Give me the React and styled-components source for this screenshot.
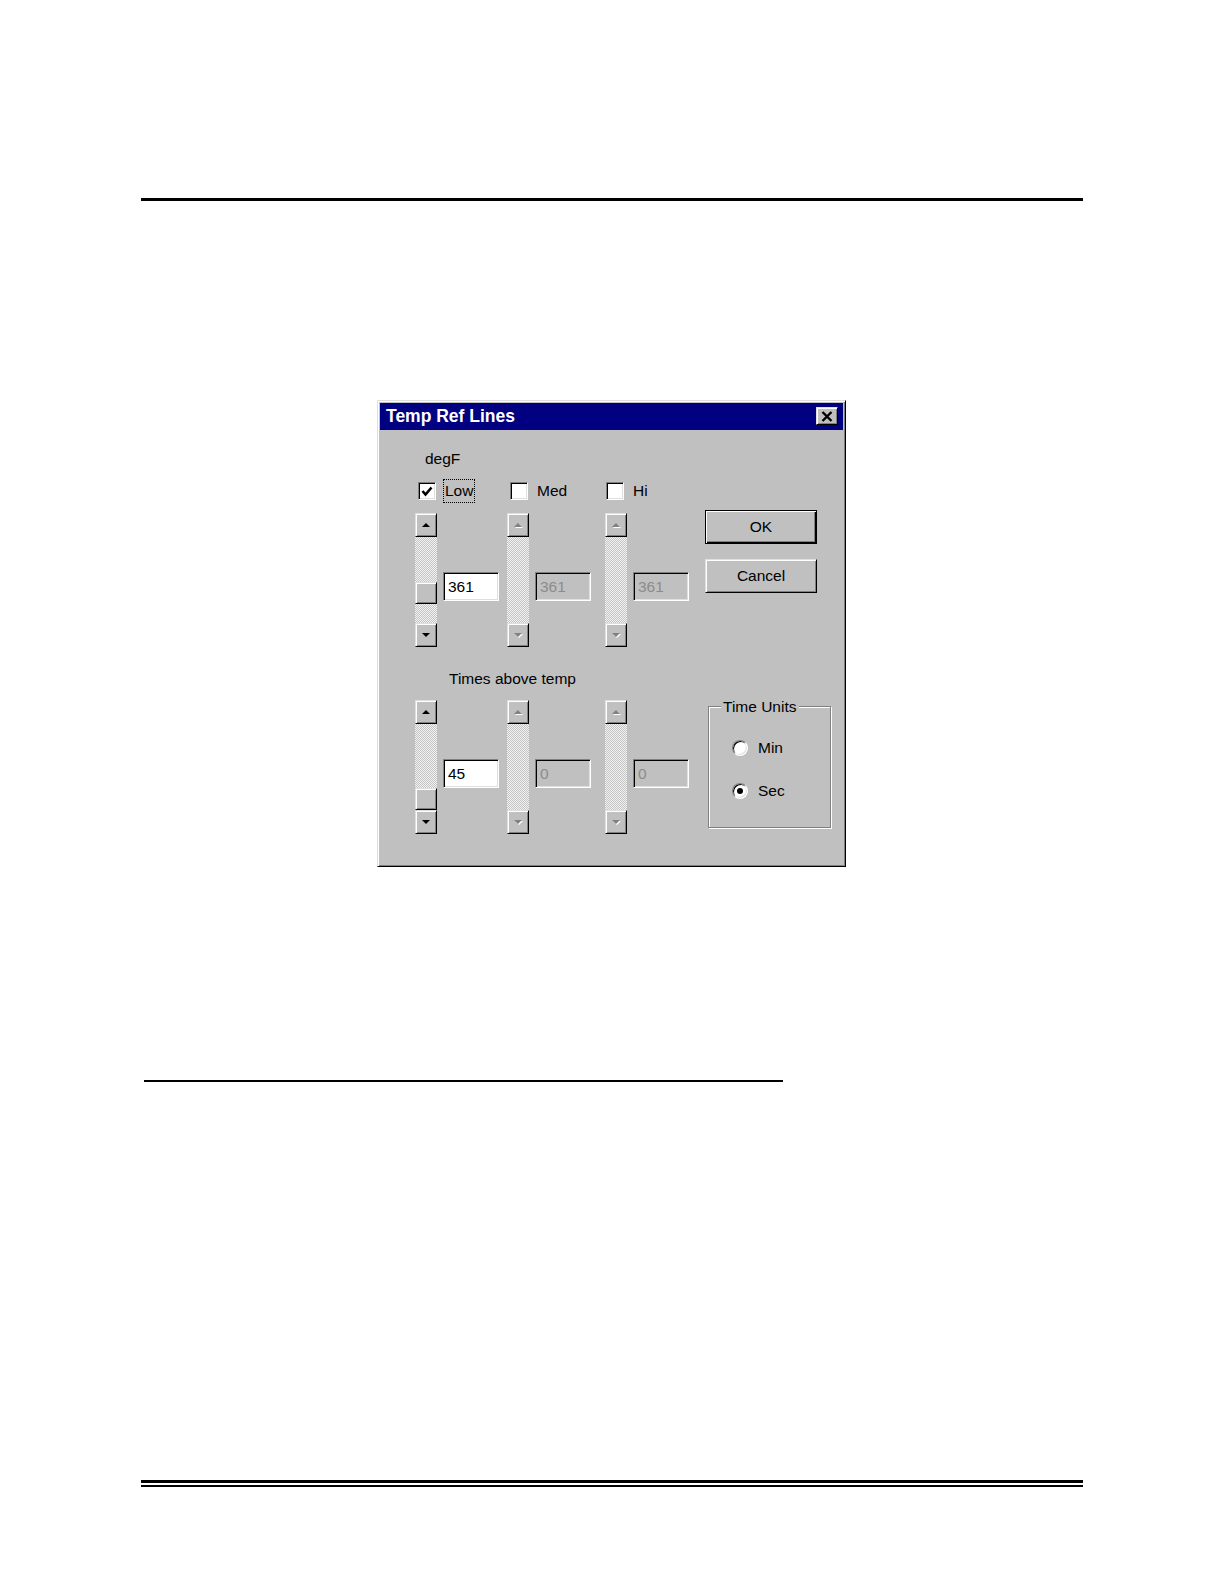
import styled, { createGlobalStyle, css } from "styled-components";

const GlobalStyle = createGlobalStyle`
  html, body {
    margin: 0;
    padding: 0;
    background: #fff;
  }
  body {
    font-family: "Liberation Sans", Arial, sans-serif;
  }
  * {
    box-sizing: border-box;
  }
`;

const raised = css`
  border: 1px solid;
  border-color: #dfdfdf #000 #000 #dfdfdf;
  box-shadow: inset 1px 1px #fff, inset -1px -1px #808080;
  background: #c0c0c0;
`;

const sunken = css`
  border: 1px solid;
  border-color: #808080 #fff #fff #808080;
  box-shadow: inset 1px 1px #000, inset -1px -1px #dfdfdf;
`;

const Page = styled.div`
  width: 1224px;
  min-height: 1584px;
  padding-top: 198px;
  display: flex;
  flex-direction: column;
`;

const Rule = styled.div`
  margin-left: ${(p) => p.left}px;
  margin-top: ${(p) => p.top || 0}px;
  width: ${(p) => p.width}px;
  height: ${(p) => p.thick}px;
  background: #000;
`;

const DoubleRule = styled.div`
  margin-left: 141px;
  margin-top: 398px;
  width: 942px;
  display: flex;
  flex-direction: column;
  gap: 1.5px;
`;

const Window = styled.div`
  ${raised};
  margin-left: 377px;
  margin-top: 199px;
  width: 469px;
  height: 467px;
  padding: 2px;
  display: flex;
  flex-direction: column;
`;

const TitleBar = styled.div`
  height: 27px;
  background: #000080;
  display: flex;
  align-items: center;
  justify-content: space-between;
  padding: 0 5px 1px 6px;
`;

const Title = styled.span`
  color: #fff;
  font-weight: bold;
  font-size: 17.5px;
  line-height: 20px;
`;

const CloseButton = styled.div`
  ${raised};
  width: 22px;
  height: 18px;
  display: flex;
  align-items: center;
  justify-content: center;
`;

const Body = styled.div`
  padding: 20px 0 0 35px;
  display: flex;
  flex-direction: column;
  font-size: 15.5px;
  color: #000;
`;

const Caption = styled.div`
  margin-left: ${(p) => p.indent}px;
  margin-top: ${(p) => p.top || 0}px;
  line-height: 18px;
  height: 18px;
`;

const Section = styled.div`
  display: flex;
  align-items: flex-start;
  margin-top: ${(p) => p.top}px;
`;

const Columns = styled.div`
  display: grid;
  grid-template-columns: 92px 98px 84px;
`;

const Column = styled.div`
  display: flex;
  flex-direction: column;
  gap: 13px;
`;

const CheckRow = styled.div`
  height: 18px;
  display: flex;
  align-items: center;
  padding-left: ${(p) => p.inset}px;
`;

const CheckBox = styled.div`
  ${sunken};
  width: 18px;
  height: 18px;
  background: #fff;
  display: flex;
  align-items: center;
  justify-content: center;
`;

const CheckLabel = styled.span`
  margin-left: 7px;
  padding: 0 1px;
  line-height: 22px;
  border: 1px ${(p) => (p.focused ? "dotted #000" : "solid transparent")};
`;

const ScrollGroup = styled.div`
  display: flex;
  align-items: flex-start;
`;

const ScrollBar = styled.div`
  width: 22px;
  height: 134px;
  display: flex;
  flex-direction: column;
`;

const ArrowButton = styled.div`
  ${raised};
  height: 24px;
  flex: none;
  display: flex;
  align-items: center;
  justify-content: center;
`;

const Arrow = styled.span`
  width: 0;
  height: 0;
  border-left: 4px solid transparent;
  border-right: 4px solid transparent;
  ${(p) => (p.down ? "border-top" : "border-bottom")}: 4px solid
    ${(p) => (p.disabled ? "#808080" : "#000")};
  ${(p) => p.disabled && "filter: drop-shadow(1px 1px 0 #fff);"}
`;

const Track = styled.div`
  flex: 1;
  background: repeating-conic-gradient(#c4c4c4 0 25%, #f2f2f2 0 50%) 0 0 / 2px 2px;
  display: flex;
  flex-direction: column;
`;

const Thumb = styled.div`
  ${raised};
  height: 22px;
  margin-top: ${(p) => p.pos * 64}px;
`;

const Field = styled.div`
  ${sunken};
  width: 56px;
  height: 29px;
  margin: 59px 0 0 6px;
  padding-left: 4px;
  display: flex;
  align-items: center;
  background: ${(p) => (p.disabled ? "#c0c0c0" : "#fff")};
  color: ${(p) => (p.disabled ? "#8c8c8c" : "#000")};
`;

const ButtonStack = styled.div`
  margin: 28px 0 0 16px;
  display: flex;
  flex-direction: column;
  gap: 15px;
`;

const PushButton = styled.div`
  ${raised};
  width: 112px;
  height: 34px;
  display: flex;
  align-items: center;
  justify-content: center;
  ${(p) =>
    p.primary &&
    css`
      border: 1px solid #000;
      box-shadow: inset 1px 1px #fff, inset -1px -1px #000, inset -2px -2px #808080;
    `}
`;

const GroupBox = styled.div`
  position: relative;
  margin: 6px 0 0 19px;
  width: 123px;
  height: 122px;
  border: 1px solid #808080;
  box-shadow: 1px 1px 0 #fff, inset 1px 1px 0 #fff;
  padding: 33px 0 0 23px;
  display: flex;
  flex-direction: column;
  gap: 27px;
`;

const Legend = styled.span`
  position: absolute;
  top: -9px;
  left: 12px;
  padding: 0 2px;
  line-height: 18px;
  background: #c0c0c0;
`;

const RadioRow = styled.div`
  height: 16px;
  display: flex;
  align-items: center;
`;

const RadioCircle = styled.div`
  ${sunken};
  width: 16px;
  height: 16px;
  border-radius: 50%;
  background: #fff;
  display: flex;
  align-items: center;
  justify-content: center;
`;

const RadioDot = styled.div`
  width: 6px;
  height: 6px;
  border-radius: 50%;
  background: #000;
`;

const RadioLabel = styled.span`
  margin-left: 10px;
  line-height: 18px;
`;

const CheckMark = () => (
  <svg width="12" height="11" viewBox="0 0 12 11">
    <path d="M1.5 5 L4.5 8.5 L10.5 1.5" fill="none" stroke="#000" strokeWidth="2.6" />
  </svg>
);

const CloseGlyph = () => (
  <svg width="12" height="11" viewBox="0 0 12 11">
    <path d="M1.5 1 L10.5 10 M10.5 1 L1.5 10" stroke="#000" strokeWidth="2.4" />
  </svg>
);

const Spinner = ({ value, disabled, pos }) => (
  <ScrollGroup>
    <ScrollBar>
      <ArrowButton>
        <Arrow disabled={disabled} />
      </ArrowButton>
      <Track>{!disabled && <Thumb pos={pos} />}</Track>
      <ArrowButton>
        <Arrow down disabled={disabled} />
      </ArrowButton>
    </ScrollBar>
    <Field disabled={disabled}>{value}</Field>
  </ScrollGroup>
);

const tempCols = [
  { label: "Low", checked: true, inset: 3 },
  { label: "Med", checked: false, inset: 3 },
  { label: "Hi", checked: false, inset: 1 },
];

export default function App() {
  return (
    <>
      <GlobalStyle />
      <Page>
        <Rule left={141} width={942} thick={3} />

        <Window>
          <TitleBar>
            <Title>Temp Ref Lines</Title>
            <CloseButton>
              <CloseGlyph />
            </CloseButton>
          </TitleBar>

          <Body>
            <Caption indent={10}>degF</Caption>

            <Section top={14}>
              <Columns>
                {tempCols.map((c, i) => (
                  <Column key={c.label}>
                    <CheckRow inset={c.inset}>
                      <CheckBox>{c.checked && <CheckMark />}</CheckBox>
                      <CheckLabel focused={i === 0}>{c.label}</CheckLabel>
                    </CheckRow>
                    <Spinner value="361" disabled={i > 0} pos={0.7} />
                  </Column>
                ))}
              </Columns>
              <ButtonStack>
                <PushButton primary>OK</PushButton>
                <PushButton>Cancel</PushButton>
              </ButtonStack>
            </Section>

            <Caption indent={34} top={23}>
              Times above temp
            </Caption>

            <Section top={12}>
              <Columns>
                <Column>
                  <Spinner value="45" pos={1} />
                </Column>
                <Column>
                  <Spinner value="0" disabled />
                </Column>
                <Column>
                  <Spinner value="0" disabled />
                </Column>
              </Columns>
              <GroupBox>
                <Legend>Time Units</Legend>
                <RadioRow>
                  <RadioCircle />
                  <RadioLabel>Min</RadioLabel>
                </RadioRow>
                <RadioRow>
                  <RadioCircle>
                    <RadioDot />
                  </RadioCircle>
                  <RadioLabel>Sec</RadioLabel>
                </RadioRow>
              </GroupBox>
            </Section>
          </Body>
        </Window>

        <Rule left={144} width={639} thick={2} top={213} />

        <DoubleRule>
          <Rule left={0} width={942} thick={3} />
          <Rule left={0} width={942} thick={2} />
        </DoubleRule>
      </Page>
    </>
  );
}
